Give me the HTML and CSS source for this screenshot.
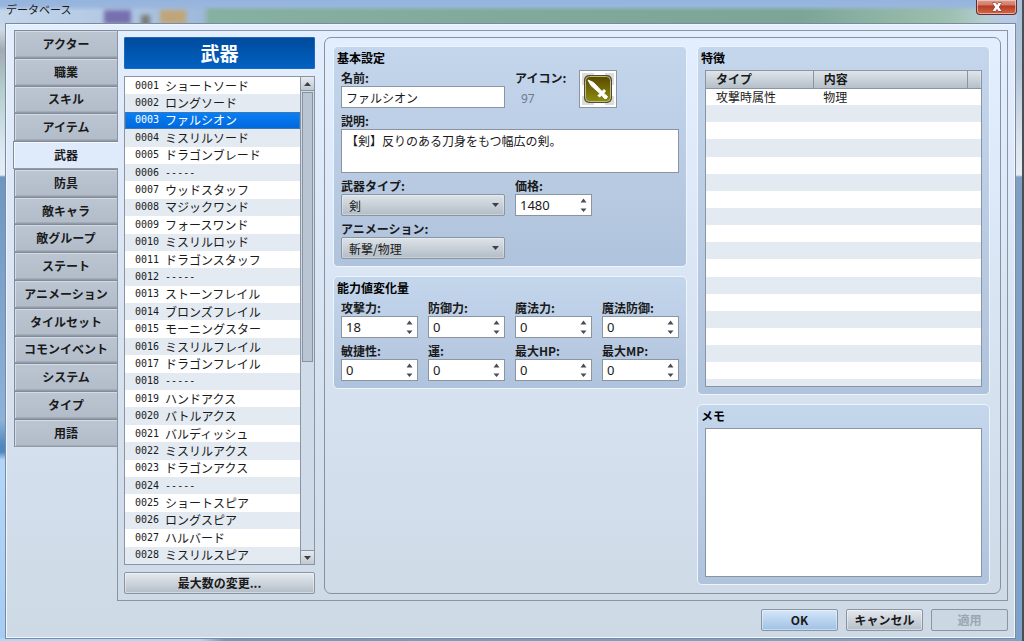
FILE: index.html
```html
<!DOCTYPE html>
<html lang="ja">
<head>
  <meta charset="UTF-8">
  <meta name="viewport" content="width=device-width, initial-scale=1.0">
  <title>データベース</title>
  <link rel="stylesheet" href="styles.css">
</head>
<body>
  <svg class="defs" aria-hidden="true">
    <symbol id="arrows" viewBox="0 0 7 14">
      <path d="M3.5 0.5L6.5 4.5H0.5z M0.5 10.5H6.5L3.5 14z" fill="#484d55"/>
    </symbol>
  </svg>

  <header class="titlebar">
    <div class="glass">
      <span class="blob purple"></span>
      <span class="blob dark"></span>
      <span class="blob orange"></span>
    </div>
    <h1 class="window-title">データベース</h1>
    <button class="close" type="button" aria-label="閉じる">
      <svg width="12" height="10" viewBox="0 0 12 10"><path d="M1.500 1h3L6 3l1.500-2h3L7.800 5 10.500 9h-3L6 7 4.500 9h-3L4.200 5z" fill="#fff" stroke="#6b3a3a" stroke-width="1" paint-order="stroke"/></svg>
    </button>
  </header>

  <form class="client">
    <div class="main">
      <nav class="tabs">
        <button type="button" class="tab">アクター</button>
        <button type="button" class="tab">職業</button>
        <button type="button" class="tab">スキル</button>
        <button type="button" class="tab">アイテム</button>
        <button type="button" class="tab active">武器</button>
        <button type="button" class="tab">防具</button>
        <button type="button" class="tab">敵キャラ</button>
        <button type="button" class="tab">敵グループ</button>
        <button type="button" class="tab">ステート</button>
        <button type="button" class="tab">アニメーション</button>
        <button type="button" class="tab">タイルセット</button>
        <button type="button" class="tab">コモンイベント</button>
        <button type="button" class="tab">システム</button>
        <button type="button" class="tab">タイプ</button>
        <button type="button" class="tab">用語</button>
      </nav>

      <div class="pane">
        <div class="side">
          <h2 class="banner">武器</h2>
          <div class="listbox">
            <ul class="list">
              <li><span class="no">0001</span>ショートソード</li>
              <li><span class="no">0002</span>ロングソード</li>
              <li class="selected"><span class="no">0003</span>ファルシオン</li>
              <li><span class="no">0004</span>ミスリルソード</li>
              <li><span class="no">0005</span>ドラゴンブレード</li>
              <li><span class="no">0006</span><span class="sep">-----</span></li>
              <li><span class="no">0007</span>ウッドスタッフ</li>
              <li><span class="no">0008</span>マジックワンド</li>
              <li><span class="no">0009</span>フォースワンド</li>
              <li><span class="no">0010</span>ミスリルロッド</li>
              <li><span class="no">0011</span>ドラゴンスタッフ</li>
              <li><span class="no">0012</span><span class="sep">-----</span></li>
              <li><span class="no">0013</span>ストーンフレイル</li>
              <li><span class="no">0014</span>ブロンズフレイル</li>
              <li><span class="no">0015</span>モーニングスター</li>
              <li><span class="no">0016</span>ミスリルフレイル</li>
              <li><span class="no">0017</span>ドラゴンフレイル</li>
              <li><span class="no">0018</span><span class="sep">-----</span></li>
              <li><span class="no">0019</span>ハンドアクス</li>
              <li><span class="no">0020</span>バトルアクス</li>
              <li><span class="no">0021</span>バルディッシュ</li>
              <li><span class="no">0022</span>ミスリルアクス</li>
              <li><span class="no">0023</span>ドラゴンアクス</li>
              <li><span class="no">0024</span><span class="sep">-----</span></li>
              <li><span class="no">0025</span>ショートスピア</li>
              <li><span class="no">0026</span>ロングスピア</li>
              <li><span class="no">0027</span>ハルバード</li>
              <li><span class="no">0028</span>ミスリルスピア</li>
            </ul>
            <div class="scrollbar">
              <button type="button" class="scroll-btn up" aria-label="上へ"><svg width="7" height="4" viewBox="0 0 7 4"><path d="M3.500 0L7 4H0z" fill="#3c4048"/></svg></button>
              <div class="track"><div class="thumb"></div></div>
              <button type="button" class="scroll-btn down" aria-label="下へ"><svg width="7" height="4" viewBox="0 0 7 4"><path d="M0 0H7L3.500 4z" fill="#3c4048"/></svg></button>
            </div>
          </div>
          <button type="button" class="btn">最大数の変更...</button>
        </div>

        <div class="panel">
          <div class="col">
            <section class="group">
              <h3>基本設定</h3>
              <div class="fields">
                <div class="field wide">
                  <label for="name">名前:</label>
                  <input id="name" type="text" value="ファルシオン">
                </div>
                <div class="icon-field">
                  <div class="icon-info">
                    <span class="caption">アイコン:</span>
                    <span class="icon-no">97</span>
                  </div>
                  <button type="button" class="icon-box" aria-label="アイコン">
                    <svg width="34" height="34" viewBox="0 0 34 34">
                      <defs>
                        <linearGradient id="gold" x1="0" y1="0" x2="0" y2="1">
                          <stop offset="0" stop-color="#5a4a00"/>
                          <stop offset="1" stop-color="#8a8c12"/>
                        </linearGradient>
                      </defs>
                      <path d="M1 1h12v12H1z M24 1h9v12h-9z M1 24h12v9H1z M24 24h9v9h-9z" fill="#dcdcdc"/>
                      <rect x="3" y="3" width="28" height="28" rx="5" fill="#4b4b43"/>
                      <rect x="4.500" y="4.500" width="25" height="25" rx="4" fill="url(#gold)" stroke="#c3bd78" stroke-width="1"/>
                      <path d="M7 8L12.500 10.500 21 19.500 23 17.500 24.500 19 22.700 21.300 26.500 24.500 25.500 26.500 23.500 26.500 20.700 23.200 18.500 25 17 23.500 19 21.500 10 13.500z" fill="#fff" stroke="#fff" stroke-width="1"/>
                    </svg>
                  </button>
                </div>
                <div class="field full">
                  <label for="desc">説明:</label>
                  <textarea id="desc" class="desc">【剣】反りのある刀身をもつ幅広の剣。</textarea>
                </div>
                <div class="field wide">
                  <label for="wtype">武器タイプ:</label>
                  <select id="wtype"><option>剣</option></select>
                </div>
                <div class="field">
                  <label for="price">価格:</label>
                  <div class="spin"><input id="price" type="text" value="1480"><svg><use href="#arrows"/></svg></div>
                </div>
                <div class="field wide first">
                  <label for="anim">アニメーション:</label>
                  <select id="anim"><option>斬撃/物理</option></select>
                </div>
              </div>
            </section>

            <section class="group">
              <h3>能力値変化量</h3>
              <div class="fields">
                <div class="field">
                  <label for="atk">攻撃力:</label>
                  <div class="spin"><input id="atk" type="text" value="18"><svg><use href="#arrows"/></svg></div>
                </div>
                <div class="field">
                  <label for="def">防御力:</label>
                  <div class="spin"><input id="def" type="text" value="0"><svg><use href="#arrows"/></svg></div>
                </div>
                <div class="field">
                  <label for="mat">魔法力:</label>
                  <div class="spin"><input id="mat" type="text" value="0"><svg><use href="#arrows"/></svg></div>
                </div>
                <div class="field">
                  <label for="mdf">魔法防御:</label>
                  <div class="spin"><input id="mdf" type="text" value="0"><svg><use href="#arrows"/></svg></div>
                </div>
                <div class="field">
                  <label for="agi">敏捷性:</label>
                  <div class="spin"><input id="agi" type="text" value="0"><svg><use href="#arrows"/></svg></div>
                </div>
                <div class="field">
                  <label for="luk">運:</label>
                  <div class="spin"><input id="luk" type="text" value="0"><svg><use href="#arrows"/></svg></div>
                </div>
                <div class="field">
                  <label for="mhp">最大HP:</label>
                  <div class="spin"><input id="mhp" type="text" value="0"><svg><use href="#arrows"/></svg></div>
                </div>
                <div class="field">
                  <label for="mmp">最大MP:</label>
                  <div class="spin"><input id="mmp" type="text" value="0"><svg><use href="#arrows"/></svg></div>
                </div>
              </div>
            </section>
          </div>

          <div class="col">
            <section class="group traits">
              <h3>特徴</h3>
              <div class="table-box">
                <table>
                  <thead>
                    <tr><th class="type">タイプ</th><th>内容</th><th class="end"></th></tr>
                  </thead>
                  <tbody>
                    <tr><td>攻撃時属性</td><td>物理</td><td></td></tr>
                    <tr><td></td><td></td><td></td></tr>
                    <tr><td></td><td></td><td></td></tr>
                    <tr><td></td><td></td><td></td></tr>
                    <tr><td></td><td></td><td></td></tr>
                    <tr><td></td><td></td><td></td></tr>
                    <tr><td></td><td></td><td></td></tr>
                    <tr><td></td><td></td><td></td></tr>
                    <tr><td></td><td></td><td></td></tr>
                    <tr><td></td><td></td><td></td></tr>
                    <tr><td></td><td></td><td></td></tr>
                    <tr><td></td><td></td><td></td></tr>
                    <tr><td></td><td></td><td></td></tr>
                    <tr><td></td><td></td><td></td></tr>
                    <tr><td></td><td></td><td></td></tr>
                    <tr><td></td><td></td><td></td></tr>
                    <tr><td></td><td></td><td></td></tr>
                    <tr class="cut"><td></td><td></td><td></td></tr>
                  </tbody>
                </table>
              </div>
            </section>

            <section class="group memo">
              <h3><label for="memo">メモ</label></h3>
              <textarea id="memo"></textarea>
            </section>
          </div>
        </div>
      </div>
    </div>

    <footer class="footer">
      <button type="button" class="btn primary">OK</button>
      <button type="button" class="btn">キャンセル</button>
      <button type="button" class="btn" disabled>適用</button>
    </footer>
  </form>
</body>
</html>
```
FILE: styles.css
```css
* {
  box-sizing: border-box;
}

body {
  margin: 0;
  height: 100vh;
  display: flex;
  flex-direction: column;
  padding: 0 8px 2px 5px;
  overflow: hidden;
  font-family: "Noto Sans CJK JP", sans-serif;
  font-size: 12px;
  line-height: 16px;
  color: #1a1a1a;
  /* aero frame */
  background:
    linear-gradient(#4a4f55, #4a4f55) right / 2px 100% no-repeat,
    linear-gradient(#a9bfdb 0, #b3c4d8 70px, #dfe7ef 150px, #e6edf3 175px, #7fa0c4 177px, #7fa2ca 100%) right / 9px 100% no-repeat,
    linear-gradient(90deg, #b3d6f8 0, #b3d6f8 200px, #7798bd 225px, #84a5c8 100%) bottom / 100% 3px no-repeat,
    linear-gradient(#c4d6ea 0, #ccd9e6 30px, #a2aab4 50px, #b4cfcc 90px, #dce8f4 150px, #e6eef6 175px, #6e96c2 177px, #8db2da 420px, #4f88c0 446px, #4f88c0 452px, #b3d6f8 460px, #a6ccf4 100%);
}

h1, h2, h3, ul {
  margin: 0;
  padding: 0;
}

button, input, select, textarea {
  font-family: inherit;
  font-size: 12px;
  color: inherit;
  margin: 0;
}

.defs {
  position: absolute;
  width: 0;
  height: 0;
}

/* title bar */
.titlebar {
  position: relative;
  flex: 0 0 23px;
  display: flex;
  justify-content: space-between;
  align-items: flex-start;
  margin: 0 -1px 0 -5px;
}

.glass {
  position: absolute;
  inset: 0;
  overflow: hidden;
  background:
    linear-gradient(#94b3de 0, #9ab6dc 6px, rgba(148, 179, 222, 0) 11px),
    linear-gradient(90deg, rgba(0,0,0,0) 0, rgba(0,0,0,0) 202px, #86b09f 210px, #82aa9b 480px, #7ca596 800px, #9dc0b0 950px, #b4cdd0 985px, #b5c9e2 1000px),
    linear-gradient(90deg, #c4d6ea, #b4cae4 100px, #9fb9db 200px);
}

.blob {
  position: absolute;
  top: 10px;
  height: 14px;
  filter: blur(2px);
}

.purple {
  left: 104px;
  width: 27px;
  background: #7670ae;
}

.dark {
  left: 141px;
  width: 9px;
  top: 15px;
  background: #7b7b78;
}

.orange {
  left: 160px;
  width: 26px;
  background: #bfa578;
}

.window-title {
  position: relative;
  padding: 1px 6px;
  font-size: 11px;
  font-weight: 400;
  line-height: 16px;
}

.close {
  position: relative;
  width: 41px;
  height: 15px;
  padding: 0;
  display: flex;
  justify-content: center;
  align-items: center;
  border: 1px solid #5f2f33;
  border-top: 0;
  border-radius: 0 0 4px 4px;
  background: linear-gradient(#dc9a8c, #cf7a69 5px, #b93a20 6px, #d0694b);
  box-shadow: inset 0 0 0 1px rgba(255, 220, 210, 0.6);
}

/* client area */
.client {
  flex: 1;
  min-height: 0;
  display: flex;
  flex-direction: column;
  gap: 8px;
  padding: 6px 7px 7px;
  border: 1px solid #7c8b9b;
  box-shadow: inset 0 0 0 1px #eff6ff;
  background: linear-gradient(#e3eeff, #cdd9e5);
}

.main {
  flex: 1;
  min-height: 0;
  display: flex;
}

.tabs {
  flex: 0 0 104px;
  height: 73%;
  display: flex;
  flex-direction: column;
}

.tab {
  flex: 1;
  min-height: 0;
  padding: 0;
  font-weight: 700;
  line-height: 16px;
  margin-left: 1px;
  border: 1px solid #828b97;
  border-right: 0;
  border-bottom-color: #929ba8;
  box-shadow: inset 1px 1px 0 #d3dbe5, inset 0 -1px 0 #a3abb7;
  background: linear-gradient(#bcc6d2, #b2bcc9);
}

.tab.active {
  position: relative;
  margin-left: 0;
  margin-right: -1px;
  background: #dfebfb;
  box-shadow: inset 1px 1px 0 #f4f9ff;
}

.pane {
  flex: 1;
  min-width: 0;
  display: flex;
  gap: 9px;
  padding: 6px;
  border: 1px solid #8b95a2;
}

/* left column */
.side {
  flex: 0 0 191px;
  display: flex;
  flex-direction: column;
  gap: 7px;
}

.banner {
  flex: 0 0 32px;
  font-size: 19px;
  line-height: 32px;
  text-align: center;
  color: #fff;
  border-radius: 2px;
  box-shadow: inset 0 0 0 1px #1d68b8;
  background: linear-gradient(#004a9b, #0262c3);
}

.listbox {
  flex: 1;
  min-height: 0;
  display: flex;
  border: 1px solid #8b95a2;
  background: #fff;
}

.list {
  flex: 1;
  display: flex;
  flex-direction: column;
  list-style: none;
}

.list li {
  flex: 1;
  min-height: 0;
  display: flex;
  align-items: center;
  gap: 6px;
  padding-left: 10px;
  line-height: 16px;
  white-space: nowrap;
}

.list li:nth-child(even) {
  background: #e3eaf1;
}

.list li.selected {
  color: #fff;
  background: linear-gradient(#0a80f5, #0067dc);
  box-shadow: inset 0 0 0 1px #3a78b8;
}

.no, .sep {
  font-family: "DejaVu Sans Mono", monospace;
  font-size: 10px;
}

.scrollbar {
  flex: 0 0 14px;
  display: flex;
  flex-direction: column;
  border-left: 1px solid #8b95a2;
}

.scroll-btn {
  flex: 0 0 14px;
  padding: 0;
  display: flex;
  justify-content: center;
  align-items: center;
  border: 0;
  background: linear-gradient(#e6ebf0, #c0c8d0);
}

.scroll-btn.up {
  border-bottom: 1px solid #8b95a2;
}

.scroll-btn.down {
  border-top: 1px solid #8b95a2;
}

.track {
  flex: 1;
  padding: 1px;
  background: #cfdbe9;
}

.thumb {
  height: 59%;
  border: 1px solid #8791a0;
  background: #b9c5d2;
}

.btn {
  height: 22px;
  padding: 0 4px;
  font-weight: 700;
  line-height: 18px;
  border: 1px solid #8b95a1;
  border-radius: 2px;
  background: linear-gradient(#e4e9ef, #b4bec8);
  box-shadow: inset 0 0 0 1px rgba(255, 255, 255, 0.4);
}

.btn.primary {
  background: linear-gradient(#d5e6f8, #9fc1e6);
}

.btn:disabled {
  color: #9aa6b3;
  background: #cbd7e3;
  box-shadow: none;
}

/* settings panel */
.panel {
  flex: 1;
  min-width: 0;
  display: grid;
  grid-template-columns: 354fr 293fr;
  gap: 10px;
  padding: 8px 10px 8px 8px;
  border: 1px solid #8791a0;
  border-radius: 7px;
}

.col {
  min-width: 0;
  min-height: 0;
  display: flex;
  flex-direction: column;
  gap: 9px;
}

.group {
  display: flex;
  flex-direction: column;
  padding: 3px 7px 7px;
  border: 1px solid #edf4fc;
  border-radius: 5px;
  background: linear-gradient(#c3d6ec, #b0c3dc);
}

.group h3 {
  margin: 0 -4px 4px;
  font-size: 12px;
  line-height: 16px;
  color: #000;
}

.fields {
  display: grid;
  grid-template-columns: repeat(4, 1fr);
  gap: 5px 10px;
}

.field {
  min-width: 0;
  display: flex;
  flex-direction: column;
}

.field label, .caption {
  font-weight: 700;
  line-height: 16px;
}

.wide {
  grid-column: span 2;
}

.full {
  grid-column: 1 / -1;
}

.first {
  grid-column: 1 / span 2;
}

input, textarea, .spin {
  width: 100%;
  border: 1px solid #8b95a2;
  border-radius: 0;
  background: #fff;
  outline: 0;
}

input {
  height: 22px;
  padding: 0 4px;
}

textarea {
  display: block;
  resize: none;
  padding: 3px 4px;
  line-height: 16px;
}

.desc {
  height: 44px;
}

select {
  appearance: none;
  width: 100%;
  height: 22px;
  padding: 0 20px 0 7px;
  border: 1px solid #8b95a1;
  border-radius: 2px;
  box-shadow: inset 0 0 0 1px rgba(255, 255, 255, 0.3);
  background:
    url("data:image/svg+xml,%3Csvg xmlns='http://www.w3.org/2000/svg' width='7' height='4'%3E%3Cpath d='M0 0h7L3.500 4z' fill='%233c4048'/%3E%3C/svg%3E") right 5px center no-repeat,
    linear-gradient(#dde3e9, #b3bcc6);
}

.spin {
  height: 22px;
  display: flex;
  align-items: center;
  padding-right: 4px;
}

.spin input {
  flex: 1;
  min-width: 0;
  height: 20px;
  border: 0;
  font-family: "Noto Sans", sans-serif;
  font-size: 13px;
}

.spin svg {
  width: 7px;
  height: 14px;
}

.icon-field {
  grid-column: span 2;
  display: flex;
}

.icon-info {
  flex: 0 0 64px;
  display: flex;
  flex-direction: column;
  white-space: nowrap;
}

.icon-no {
  padding-left: 6px;
  font-family: "Noto Sans", sans-serif;
  line-height: 26px;
  color: #6d7b8c;
}

.icon-box {
  width: 38px;
  height: 38px;
  padding: 1px;
  border: 1px solid #8b95a2;
  background: #fff;
}

.icon-box svg {
  display: block;
}

.fields .icon-field {
  height: 38px;
}

.traits {
  flex: 336;
  min-height: 0;
}

.memo {
  flex: 169;
  min-height: 0;
}

.memo textarea {
  flex: 1;
}

.table-box {
  flex: 1;
  min-height: 0;
  border: 1px solid #8b95a2;
  background: #fff;
}

table {
  width: 100%;
  height: 100%;
  table-layout: fixed;
  border-collapse: collapse;
}

tr {
  height: 17px;
}

tr.cut {
  height: 6px;
}

th, td {
  padding: 0 0 0 10px;
  text-align: left;
  line-height: 16px;
}

th {
  border-right: 1px solid #8b95a2;
  border-bottom: 1px solid #8b95a2;
}

th:last-child {
  border-right: 0;
}

thead tr {
  background: linear-gradient(#dfe5eb, #b5bfc9);
}

.type {
  width: 39%;
}

.end {
  width: 5%;
}

tbody tr:nth-child(even) {
  background: #e3eaf1;
}

.footer {
  display: flex;
  justify-content: flex-end;
  gap: 8px;
}

.footer .btn {
  width: 77px;
}
```
